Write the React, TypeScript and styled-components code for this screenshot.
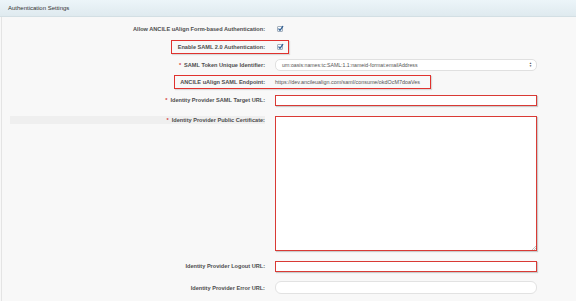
import React from "react";
import styled, { createGlobalStyle } from "styled-components";

const Global = createGlobalStyle`
  html, body { margin: 0; padding: 0; background: #f8f8f8; }
  body { font-family: "Liberation Sans", Arial, sans-serif; width: 576px; height: 301px; overflow: hidden; }
  * { box-sizing: border-box; }
`;

const Panel = styled.div`
  width: 576px;
  height: 301px;
  display: flex;
  flex-direction: column;
`;

const Header = styled.div`
  height: 17px;
  flex: none;
  display: flex;
  align-items: center;
  padding-left: 8px;
  background: linear-gradient(#ecf5f9, #dfeaef);
  border-bottom: 1px solid #d3dfe4;
  font-size: 6px;
  color: #333;
`;

const Body = styled.div`
  flex: 1;
  margin-left: 1px;
  border-left: 1px solid #e4e4e4;
  padding-top: 5px;
  display: flex;
  flex-direction: column;
`;

const Row = styled.div<{ $h: number; $mt: number; $top?: boolean }>`
  position: relative;
  height: ${(p) => p.$h}px;
  margin-top: ${(p) => p.$mt}px;
  display: grid;
  grid-template-columns: 263px 1fr;
  column-gap: 10px;
  align-items: ${(p) => (p.$top ? "start" : "center")};
`;

const Label = styled.div<{ $shade?: boolean }>`
  text-align: right;
  font-size: 5.6px;
  font-weight: bold;
  color: #4d4d4d;
  white-space: nowrap;
  margin-left: 8px;
  padding: 1px 0;
  background: ${(p) => (p.$shade ? "#efefef" : "transparent")};
`;

const Req = styled.span`
  color: #d43a3a;
  margin-right: 3px;
`;

const Check = styled.span`
  width: 6px;
  height: 6px;
  margin-left: 2px;
  margin-top: -1px;
  border: 1px solid #a4b0bd;
  border-radius: 1px;
  background: linear-gradient(#ffffff, #e4ecf4);
  display: block;
  position: relative;
`;

const CheckMark = styled.svg`
  position: absolute;
  left: -1px;
  top: -2px;
  width: 7px;
  height: 7px;
`;

const Field = styled.div<{ $red?: boolean; $h?: number; $round?: boolean }>`
  width: 262px;
  height: ${(p) => p.$h ?? 12}px;
  background: #fff;
  border: 1px solid ${(p) => (p.$red ? "#d93a35" : "#e2e2e2")};
  border-radius: ${(p) => (p.$round ? "6px" : "0")};
  box-shadow: ${(p) => (p.$red ? "1px 1px 1px rgba(0,0,0,0.18)" : "none")};
  position: relative;
`;

const Select = styled.div`
  width: 262px;
  height: 12px;
  background: #fff;
  border: 1px solid #e0e0e0;
  border-radius: 5px;
  display: flex;
  align-items: center;
  justify-content: space-between;
  padding: 0 4px 0 6px;
  font-size: 5.2px;
  color: #555;
`;

const Arrows = styled.span`
  display: flex;
  flex-direction: column;
  font-size: 3px;
  line-height: 3px;
  color: #555;
`;

const Value = styled.div`
  font-size: 5.4px;
  color: #555;
  white-space: nowrap;
`;

const Mark = styled.div<{ $left: number; $width: number }>`
  position: absolute;
  top: 0;
  bottom: 0;
  left: ${(p) => p.$left}px;
  width: ${(p) => p.$width}px;
  border: 1.5px solid #e0322e;
  box-shadow: 1px 1px 1px rgba(0,0,0,0.12);
  pointer-events: none;
`;

const Grip = styled.svg`
  position: absolute;
  right: 0;
  bottom: 0;
  width: 5px;
  height: 5px;
`;

const Tick = () => (
  <Check>
    <CheckMark viewBox="0 0 7 7">
      <path d="M1.8 3.9 L3 5.4 L5.8 1.4" fill="none" stroke="#2f5e93" strokeWidth="1.2" strokeLinecap="round" strokeLinejoin="round" />
    </CheckMark>
  </Check>
);

export default function App() {
  return (
    <>
      <Global />
      <Panel>
        <Header>Authentication Settings</Header>
        <Body>
          <Row $h={14} $mt={0}>
            <Label>Allow ANCILE uAlign Form-based Authentication:</Label>
            <div><Tick /></div>
          </Row>
          <Row $h={14} $mt={4}>
            <Label>Enable SAML 2.0 Authentication:</Label>
            <div><Tick /></div>
            <Mark $left={169} $width={118} />
          </Row>
          <Row $h={14} $mt={4}>
            <Label><Req>*</Req>SAML Token Unique Identifier:</Label>
            <Select>
              <span>urn:oasis:names:tc:SAML:1.1:nameid-format:emailAddress</span>
              <Arrows><span>▲</span><span>▼</span></Arrows>
            </Select>
          </Row>
          <Row $h={14} $mt={3}>
            <Label>ANCILE uAlign SAML Endpoint:</Label>
            <Value>https://dev.ancileualign.com/saml/consume/okdOcM7doaVes</Value>
            <Mark $left={172} $width={257} />
          </Row>
          <Row $h={12} $mt={5}>
            <Label><Req>*</Req>Identity Provider SAML Target URL:</Label>
            <Field $red $h={11} />
          </Row>
          <Row $h={135} $mt={10} $top>
            <Label $shade><Req>*</Req>Identity Provider Public Certificate:</Label>
            <Field $red $h={135}>
              <Grip viewBox="0 0 5 5">
                <path d="M1 5 L5 1 M3 5 L5 3" stroke="#aaa" strokeWidth="0.7" />
              </Grip>
            </Field>
          </Row>
          <Row $h={12} $mt={9}>
            <Label>Identity Provider Logout URL:</Label>
            <Field $red $h={11} />
          </Row>
          <Row $h={13} $mt={9}>
            <Label>Identity Provider Error URL:</Label>
            <Field $round $h={13} />
          </Row>
        </Body>
      </Panel>
    </>
  );
}
